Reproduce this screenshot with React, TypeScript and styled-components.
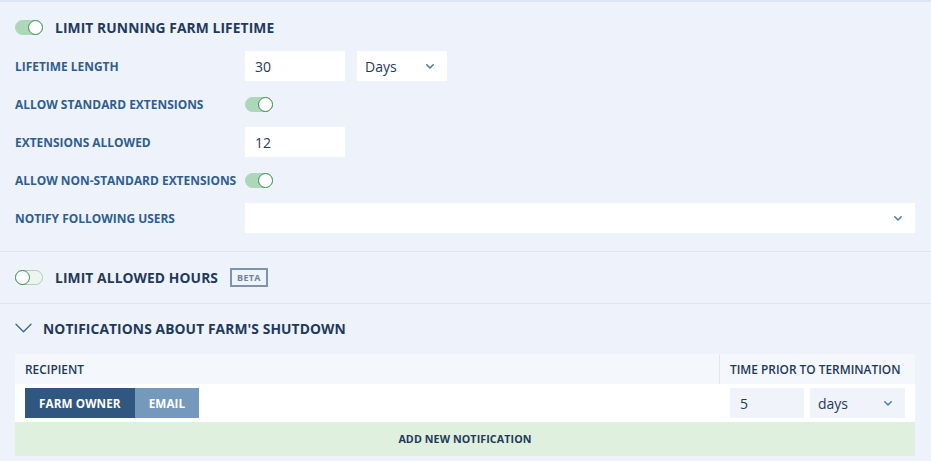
import React from "react";
import styled, { createGlobalStyle } from "styled-components";

const Global = createGlobalStyle`
  html, body { margin: 0; padding: 0; background: #eef2fa; }
  body { font-family: "Open Sans", "Noto Sans", sans-serif; color: #1f3a5a; }
  * { box-sizing: border-box; }
`;

const Page = styled.div`
  border-top: 2px solid #dce7f5;
  background: #eef2fa;
`;

const Section = styled.section<{ $pt: number; $pb: number }>`
  padding: ${(p) => p.$pt}px 16px ${(p) => p.$pb}px 15px;
  border-bottom: 1px solid #dde6f2;
  &:last-child { border-bottom: none; }
`;

const Header = styled.div<{ $gap?: number }>`
  display: flex;
  align-items: center;
  height: 20px;
  gap: ${(p) => p.$gap ?? 12}px;
`;

const Title = styled.h2`
  margin: 0;
  font-size: 13.8px;
  font-weight: 700;
  color: #1f3a5a;
  letter-spacing: 0.1px;
`;

const Badge = styled.span`
  margin-left: 0;
  border: 2px solid #7f93aa;
  color: #6f849c;
  font-size: 9px;
  font-weight: 700;
  padding: 1px 5px;
  line-height: 13px;
  letter-spacing: 0.3px;
`;

const Track = styled.span<{ $on: boolean }>`
  position: relative;
  display: inline-block;
  width: 28px;
  height: 15px;
  border-radius: 8px;
  background: ${(p) => (p.$on ? "#add7b9" : "#eef5f1")};
  border: 1px solid ${(p) => (p.$on ? "#add7b9" : "#a9d3b4")};
  flex: none;
`;

const Knob = styled.span<{ $on: boolean }>`
  position: absolute;
  top: -1px;
  ${(p) => (p.$on ? "right: -1px;" : "left: -1px;")}
  width: 15px;
  height: 15px;
  border-radius: 50%;
  background: #fff;
  border: 1.5px solid #3f8a50;
`;

const Toggle = ({ on }: { on: boolean }) => (
  <Track $on={on}>
    <Knob $on={on} />
  </Track>
);

const Form = styled.div`
  margin-top: 14px;
  display: grid;
  grid-template-columns: 230px 1fr;
  row-gap: 8px;
`;

const Label = styled.div`
  height: 30px;
  display: flex;
  align-items: center;
  font-size: 11.95px;
  font-weight: 700;
  color: #2f5e8e;
  white-space: nowrap;
`;

const Controls = styled.div`
  height: 30px;
  display: flex;
  align-items: center;
  gap: 12px;
`;

const Input = styled.div<{ $w: number; $bg?: string }>`
  width: ${(p) => p.$w}px;
  height: 30px;
  background: ${(p) => p.$bg || "#fff"};
  display: flex;
  align-items: center;
  padding: 0 10px;
  font-size: 14px;
  color: #1f3a5a;
`;

const Select = styled.div<{ $w?: number; $bg?: string; $grow?: boolean }>`
  ${(p) => (p.$grow ? "flex: 1;" : `width: ${p.$w}px;`)}
  height: 30px;
  background: ${(p) => p.$bg || "#fff"};
  display: flex;
  align-items: center;
  justify-content: space-between;
  padding: 0 13px 0 8px;
  font-size: 14px;
  color: #1f3a5a;
`;

const Chevron = () => (
  <svg width="8" height="5" viewBox="0 0 8 5" fill="none">
    <path d="M0.8 0.8l3.2 3.2 3.2-3.2" stroke="#4c7aa8" strokeWidth="1.5" strokeLinecap="round" strokeLinejoin="round" />
  </svg>
);

const Table = styled.div`
  margin-top: 16px;
  width: 900px;
`;

const HeadRow = styled.div`
  display: grid;
  grid-template-columns: 704px 196px;
  height: 30px;
  background: #f4f7fc;
`;

const HeadCell = styled.div<{ $divider?: boolean }>`
  display: flex;
  align-items: center;
  padding: 0 10px;
  font-size: 11.9px;
  font-weight: 600;
  color: #1f3a5a;
  white-space: nowrap;
  ${(p) => (p.$divider ? "border-left: 1px solid #dfe7f2;" : "")}
`;

const BodyRow = styled.div`
  display: grid;
  grid-template-columns: 705px 195px;
  height: 38px;
  background: #fff;
`;

const Cell = styled.div<{ $gap?: number }>`
  display: flex;
  align-items: center;
  padding: 0 10px;
  gap: ${(p) => p.$gap || 0}px;
`;

const SegButton = styled.div<{ $active?: boolean }>`
  height: 30px;
  display: flex;
  align-items: center;
  padding: 0 14px;
  background: ${(p) => (p.$active ? "#30577f" : "#7499bd")};
  color: #fff;
  font-size: 11.7px;
  font-weight: 700;
  letter-spacing: 0.1px;
`;

const AddRow = styled.div`
  height: 34px;
  background: #e0f0df;
  display: flex;
  align-items: center;
  justify-content: center;
  font-size: 10.7px;
  font-weight: 700;
  color: #1f3a5a;
  letter-spacing: 0.1px;
`;

const Chevron2 = () => (
  <svg width="17" height="10" viewBox="0 0 17 10" fill="none">
    <path d="M1 1.2l7.5 7.5 7.5-7.5" stroke="#3a6a98" strokeWidth="1.4" strokeLinecap="round" strokeLinejoin="round" />
  </svg>
);

export default function App() {
  return (
    <Page>
      <Global />
      <Section $pt={15} $pb={18}>
        <Header>
          <Toggle on />
          <Title>LIMIT RUNNING FARM LIFETIME</Title>
        </Header>
        <Form>
          <Label>LIFETIME LENGTH</Label>
          <Controls>
            <Input $w={100}>30</Input>
            <Select $w={90}>
              Days <Chevron />
            </Select>
          </Controls>
          <Label>ALLOW STANDARD EXTENSIONS</Label>
          <Controls>
            <Toggle on />
          </Controls>
          <Label>EXTENSIONS ALLOWED</Label>
          <Controls>
            <Input $w={100}>12</Input>
          </Controls>
          <Label>ALLOW NON-STANDARD EXTENSIONS</Label>
          <Controls>
            <Toggle on />
          </Controls>
          <Label>NOTIFY FOLLOWING USERS</Label>
          <Controls>
            <Select $grow>
              <span />
              <Chevron />
            </Select>
          </Controls>
        </Form>
      </Section>
      <Section $pt={15} $pb={16}>
        <Header>
          <Toggle on={false} />
          <Title>LIMIT ALLOWED HOURS</Title>
          <Badge>BETA</Badge>
        </Header>
      </Section>
      <Section $pt={14} $pb={5}>
        <Header $gap={11}>
          <Chevron2 />
          <Title>NOTIFICATIONS ABOUT FARM'S SHUTDOWN</Title>
        </Header>
        <Table>
          <HeadRow>
            <HeadCell>RECIPIENT</HeadCell>
            <HeadCell $divider>TIME PRIOR TO TERMINATION</HeadCell>
          </HeadRow>
          <BodyRow>
            <Cell>
              <SegButton $active>FARM OWNER</SegButton>
              <SegButton>EMAIL</SegButton>
            </Cell>
            <Cell $gap={6}>
              <Input $w={74} $bg="#f0f3f9">5</Input>
              <Select $w={95} $bg="#f0f3f9">
                days <Chevron />
              </Select>
            </Cell>
          </BodyRow>
          <AddRow>ADD NEW NOTIFICATION</AddRow>
        </Table>
      </Section>
    </Page>
  );
}
